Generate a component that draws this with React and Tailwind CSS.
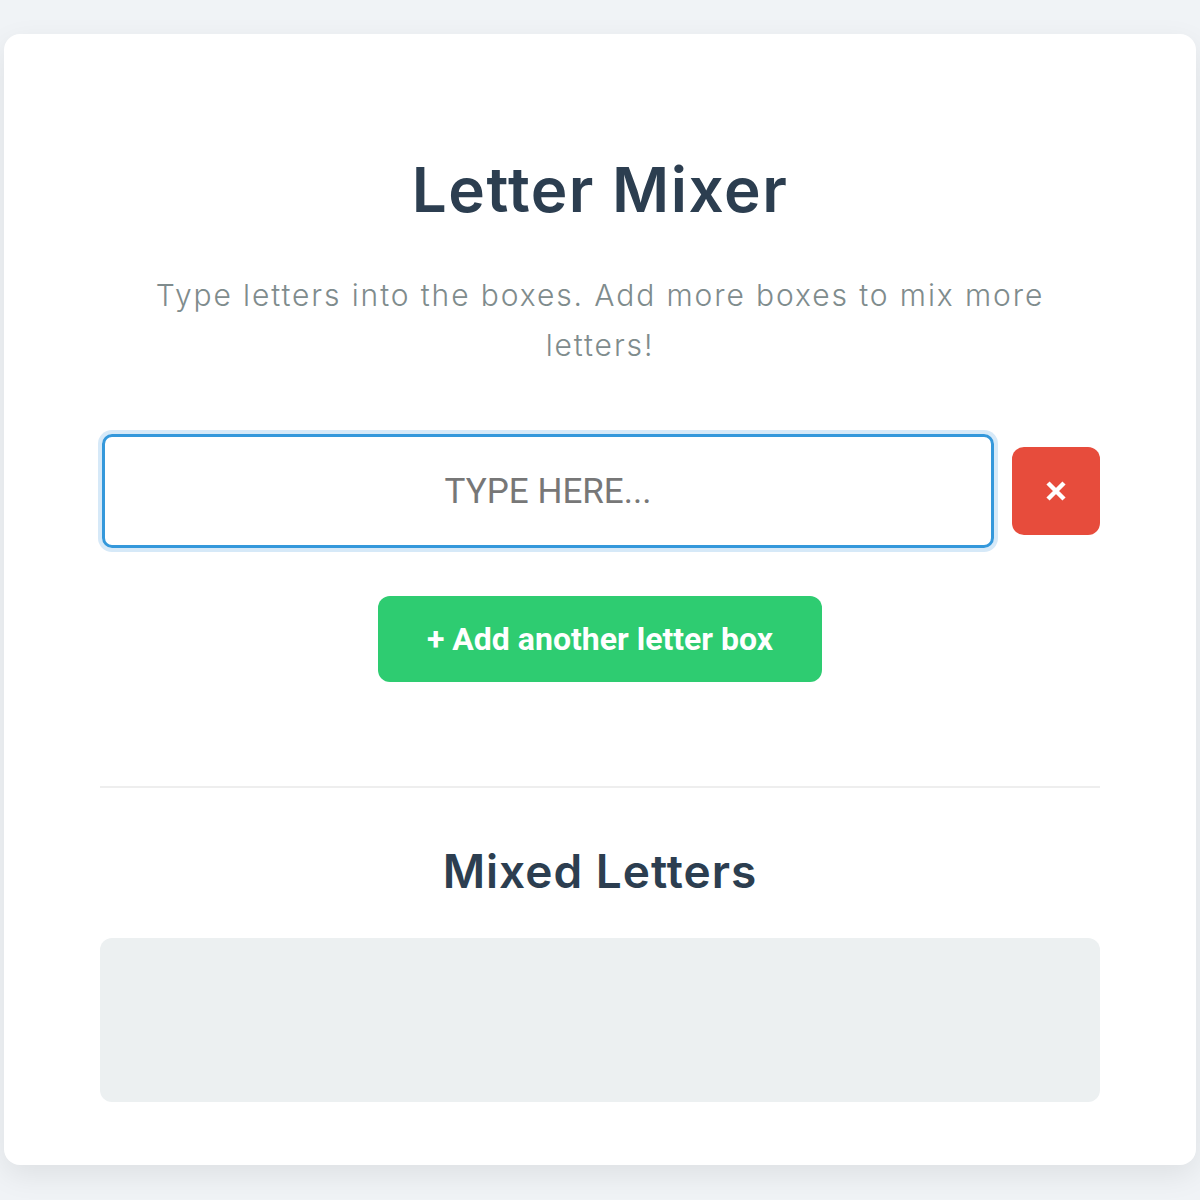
import { useState } from 'react'

export default function App() {
  const [boxes, setBoxes] = useState([''])

  const mixed = boxes.join('').split('').sort(() => Math.random() - 0.5).join('')

  return (
    <div className="min-h-screen bg-[#f0f3f6] px-[4px] pt-[34px] pb-[34px]" style={{ fontFamily: 'Inter, "Noto Sans", sans-serif' }}>
      <div className="bg-white rounded-2xl shadow-[0_10px_30px_rgba(0,0,0,0.08)] px-[96px] pt-[120px] pb-[63px]">
        {/* Header */}
        <h1 className="text-center text-[62px] leading-[72px] font-semibold text-[#2c3e50] tracking-[1.5px]">
          Letter Mixer
        </h1>
        <p className="mt-[44px] mx-auto max-w-[920px] text-center text-[30px] leading-[50px] font-light text-[#7f8c8d] tracking-[1.9px]">
          Type letters into the boxes. Add more boxes to mix more letters!
        </p>

        {/* Letter boxes */}
        <div className="mt-[64px] flex flex-col gap-4">
          {boxes.map((value, i) => (
            <div key={i} className="flex items-center gap-[18px]">
              <input
                value={value}
                onChange={(e) => setBoxes(boxes.map((b, j) => (j === i ? e.target.value : b)))}
                placeholder="TYPE HERE..."
                className="ml-[2px] flex-1 h-[114px] rounded-[10px] border-[3px] border-[#3498db] ring-4 ring-[#d6e9f8] outline-none text-center text-[35px] uppercase text-[#333] placeholder-[#777]"
                style={{ fontFamily: 'Roboto, sans-serif' }}
              />
              <button
                onClick={() => setBoxes(boxes.filter((_, j) => j !== i))}
                className="w-[88px] h-[88px] shrink-0 rounded-xl bg-[#e74c3c] flex items-center justify-center"
              >
                <svg width="22" height="22" viewBox="0 0 22 22">
                  <path d="M3 3 L19 19 M19 3 L3 19" stroke="white" strokeWidth="4.5" strokeLinecap="butt" />
                </svg>
              </button>
            </div>
          ))}
        </div>

        <div className="mt-[48px] flex justify-center">
          <button
            onClick={() => setBoxes([...boxes, ''])}
            className="w-[444px] h-[86px] rounded-xl bg-[#2ecc71] text-white text-[32px] font-bold"
            style={{ fontFamily: 'Roboto, sans-serif' }}
          >
            + Add another letter box
          </button>
        </div>

        <div className="mt-[104px] border-t-2 border-[#eeeeee]" />

        {/* Result */}
        <h2 className="mt-[56px] text-center text-[46px] leading-[54px] font-semibold text-[#2c3e50] tracking-[1px]">
          Mixed Letters
        </h2>
        <div className="mt-[40px] h-[164px] rounded-xl bg-[#ecf0f1] flex items-center justify-center text-[40px] tracking-[8px] text-[#2c3e50]">
          {mixed}
        </div>
      </div>
    </div>
  )
}
